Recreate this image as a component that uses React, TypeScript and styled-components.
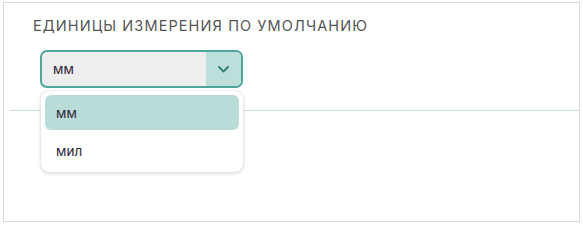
import styled, { createGlobalStyle } from 'styled-components'

const GlobalStyle = createGlobalStyle`
  body {
    margin: 0;
    background: #ffffff;
    font-family: Inter, 'Noto Sans', sans-serif;
  }
`

const Frame = styled.div`
  box-sizing: border-box;
  margin: 2px 0 0 3px;
  width: 577px;
  height: 220px;
  border: 1px solid #d9d9d9;
  background: #ffffff;
`

const Section = styled.section`
  padding: 13px 0 0 29px;
`

const Title = styled.h3`
  margin: 0;
  font-size: 14.5px;
  line-height: 19px;
  font-weight: 400;
  letter-spacing: 1.1px;
  color: #555555;
`

const SelectWrap = styled.div`
  position: relative;
  margin: 15px 0 0 7px;
  width: 203px;
`

const SelectBox = styled.div`
  box-sizing: border-box;
  display: flex;
  align-items: stretch;
  height: 38px;
  border: 2px solid #4ea59c;
  border-radius: 7px;
  background: #eeeeee;
  overflow: hidden;
`

const Value = styled.span`
  flex: 1;
  display: flex;
  align-items: center;
  padding-left: 11px;
  font-size: 13.5px;
  font-weight: 400;
  color: #2e2838;
`

const Arrow = styled.span`
  width: 35px;
  display: flex;
  align-items: center;
  justify-content: center;
  background: #bcdfdb;
`

const Menu = styled.ul`
  position: absolute;
  top: 41px;
  left: 1px;
  box-sizing: border-box;
  width: 202px;
  margin: 0;
  padding: 4px;
  list-style: none;
  background: #ffffff;
  border-radius: 8px;
  box-shadow: 0 1px 4px rgba(0, 0, 0, 0.18), 0 0 1px rgba(0, 0, 0, 0.15);
  z-index: 2;
`

const Item = styled.li<{ active?: boolean }>`
  display: flex;
  align-items: center;
  height: 35px;
  padding-left: 11px;
  border-radius: 6px;
  font-size: 13.5px;
  font-weight: 400;
  color: #2e2838;
  background: ${(p) => (p.active ? '#badcd9' : 'transparent')};
  & + & {
    margin-top: 3px;
  }
`

const Divider = styled.hr`
  margin: 22px 0 0 6px;
  border: none;
  border-top: 1px solid #c9dedc;
`

export default function App() {
  return (
    <>
      <GlobalStyle />
      <Frame>
        <Section>
          <Title>ЕДИНИЦЫ ИЗМЕРЕНИЯ ПО УМОЛЧАНИЮ</Title>
          <SelectWrap>
            <SelectBox>
              <Value>мм</Value>
              <Arrow>
                <svg width="11" height="7" viewBox="0 0 11 7" fill="none">
                  <path d="M1 1l4.5 4.5L10 1" stroke="#2f7c77" strokeWidth="1.8" strokeLinecap="round" strokeLinejoin="round" />
                </svg>
              </Arrow>
            </SelectBox>
            <Menu>
              <Item active>мм</Item>
              <Item>мил</Item>
            </Menu>
          </SelectWrap>
        </Section>
        <Divider />
      </Frame>
    </>
  )
}
